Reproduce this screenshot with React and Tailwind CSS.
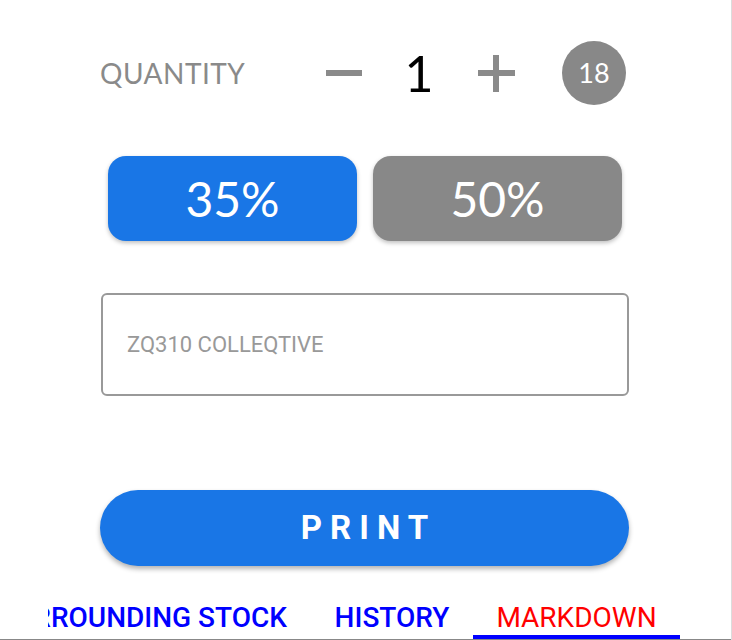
import React, { useState } from "react";

const avenir = { fontFamily: "Lato, 'Open Sans', sans-serif" };
const roboto = { fontFamily: "Roboto, 'Liberation Sans', sans-serif" };

export default function App() {
  const [qty, setQty] = useState(1);
  const [pct, setPct] = useState(35);
  const [tab, setTab] = useState("markdown");

  return (
    <div className="w-[732px] h-[640px] bg-white flex flex-col border-r border-[#dcdcdc] overflow-hidden">
      {/* Quantity row */}
      <div className="h-[146px] flex items-start pt-[41px]">
        <div className="flex items-center h-[64px] w-full">
          <div className="w-[100px]" />
          <span className="text-[28px] text-[#8a8a8a] tracking-[0.5px] w-[217px]" style={avenir}>QUANTITY</span>
          <button onClick={() => setQty(Math.max(1, qty - 1))} className="w-[54px] h-[64px] flex items-center justify-center">
            <span className="block w-[36px] h-[6px] bg-[#8a8a8a]" />
          </button>
          <span className="w-[96px] text-center text-[50px] text-black leading-none" style={avenir}>{qty}</span>
          <button onClick={() => setQty(qty + 1)} className="ml-[10px] w-[38px] h-[64px] flex items-center justify-center relative">
            <span className="absolute w-[37px] h-[6px] bg-[#8a8a8a]" />
            <span className="absolute w-[6px] h-[37px] bg-[#8a8a8a]" />
          </button>
          <div className="ml-[47px] w-[64px] h-[64px] rounded-full bg-[#888888] flex items-center justify-center text-white text-[27px]" style={avenir}>18</div>
        </div>
      </div>

      {/* Percentage buttons */}
      <div className="flex gap-[16px] pl-[108px] h-[147px] items-start pt-[10px]">
        {[35, 50].map((p) => (
          <button
            key={p}
            onClick={() => setPct(p)}
            className={`w-[249px] h-[85px] rounded-[18px] text-white text-[48px] shadow-[0_2px_4px_rgba(0,0,0,0.25)] ${pct === p ? "bg-[#1976e6]" : "bg-[#888888]"}`}
            style={avenir}
          >
            {p}%
          </button>
        ))}
      </div>

      {/* Input */}
      <div className="pl-[101px] h-[197px]">
        <div className="w-[528px] h-[103px] border-2 border-[#999999] rounded-[6px] flex items-center pl-[24px]">
          <span className="text-[22px] text-[#999999]" style={roboto}>ZQ310 COLLEQTIVE</span>
        </div>
      </div>

      {/* Print */}
      <div className="pl-[100px] h-[105px]">
        <button className="w-[529px] h-[76px] rounded-full bg-[#1976e6] text-white text-[33px] font-bold tracking-[8px] pl-[8px] shadow-[0_3px_5px_rgba(0,0,0,0.3)]" style={roboto}>
          PRINT
        </button>
      </div>

      {/* Tabs */}
      <div className="flex-1 flex items-stretch border-b border-[#888888] overflow-hidden" style={roboto}>
        <div className="w-[48px] shrink-0" />
        <button onClick={() => setTab("stock")} className="w-[263px] shrink-0 flex justify-end items-center pt-[2px] pr-[24px] overflow-hidden">
          <span className="whitespace-nowrap text-[28px] font-medium text-[#0000ff]">SURROUNDING STOCK</span>
        </button>
        <button onClick={() => setTab("history")} className="w-[162px] shrink-0 flex justify-center items-center pt-[2px]">
          <span className="text-[28px] font-medium text-[#0000ff]">HISTORY</span>
        </button>
        <button onClick={() => setTab("markdown")} className={`w-[207px] shrink-0 flex justify-center items-center pt-[6px] border-b-[4px] ${tab === "markdown" ? "border-[#0000ff]" : "border-transparent"}`}>
          <span className="text-[28px] text-[#ff0000]">MARKDOWN</span>
        </button>
      </div>
    </div>
  );
}
